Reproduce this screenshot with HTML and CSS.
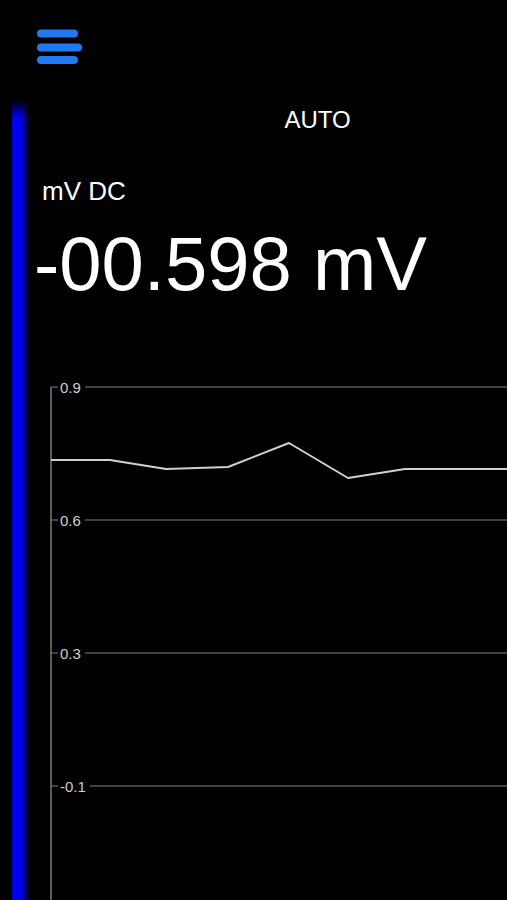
FILE: index.html
```html
<!DOCTYPE html>
<html lang="en">
<head>
  <meta charset="UTF-8" />
  <meta name="viewport" content="width=device-width, initial-scale=1.0" />
  <title>Multimeter</title>
  <link rel="stylesheet" href="styles.css">
</head>
<body>
  <div class="app">
    <div class="menu">
      <svg class="menu-icon" width="46" height="38" viewBox="0 0 46 38">
        <line x1="4" y1="5.5" x2="37" y2="5.5" />
        <line x1="4" y1="19.5" x2="41" y2="19.5" />
        <line x1="4" y1="32" x2="37" y2="32" />
      </svg>
    </div>
    <div class="level"></div>
    <div class="content">
      <div class="mode">AUTO</div>
      <div class="function">mV DC</div>
      <div class="reading">-00.598 mV</div>
      <svg class="chart" width="457" height="523" viewBox="0 0 457 523">
        <line class="axis" x1="1" y1="10" x2="1" y2="523" />
        <line class="grid" x1="1" y1="10" x2="457" y2="10" />
        <line class="grid" x1="1" y1="143" x2="457" y2="143" />
        <line class="grid" x1="1" y1="276" x2="457" y2="276" />
        <line class="grid" x1="1" y1="409" x2="457" y2="409" />
        <rect class="label-bg" x="8" y="2" width="27" height="16" />
        <text class="label" x="10" y="15.5">0.9</text>
        <rect class="label-bg" x="8" y="135" width="27" height="16" />
        <text class="label" x="10" y="148.5">0.6</text>
        <rect class="label-bg" x="8" y="268" width="27" height="16" />
        <text class="label" x="10" y="281.5">0.3</text>
        <rect class="label-bg" x="8" y="401" width="32" height="16" />
        <text class="label" x="10" y="414.5">-0.1</text>
        <polyline class="trace" points="1,83 60,83 116,92 178,90 239,66 298,101 355,92 457,92" />
      </svg>
    </div>
  </div>
</body>
</html>
```

FILE: styles.css
```css
body {
  margin: 0;
  background: #000;
  color: #fff;
  font-family: "Liberation Sans", Arial, sans-serif;
  overflow: hidden;
}
.app {
  display: grid;
  grid-template-columns: 30px 1fr;
  grid-template-rows: 100px 1fr;
  height: 900px;
}
.menu {
  grid-column: 1 / -1;
  padding: 28px 0 0 37px;
}
.menu-icon {
  display: block;
}
.menu-icon line {
  stroke: #1f7af2;
  stroke-width: 8;
  stroke-linecap: round;
}
.level {
  margin-left: 12px;
  background: linear-gradient(to right, #0000c8 0%, #0000ff 12%, #0000ee 50%, #000 100%);
  -webkit-mask-image: linear-gradient(to bottom, transparent 0, #000 18px);
  mask-image: linear-gradient(to bottom, transparent 0, #000 18px);
}
.content {
  min-width: 0;
}
.mode {
  margin-top: 6px;
  padding-left: 98px;
  font-size: 24px;
  line-height: 27px;
  text-align: center;
}
.function {
  margin-top: 44px;
  padding-left: 12px;
  font-size: 26px;
  line-height: 29px;
}
.reading {
  margin-top: 20px;
  padding-left: 4px;
  font-size: 76px;
  line-height: 76px;
  white-space: nowrap;
}
.chart {
  display: block;
  margin: 75px 0 0 20px;
}
.chart .axis {
  stroke: #7a7a7a;
  stroke-width: 1.5;
}
.chart .grid {
  stroke: #808080;
  stroke-width: 1;
}
.chart .label-bg {
  fill: #000;
}
.chart .label {
  fill: #cfcfcf;
  font-size: 15px;
  font-family: "Liberation Sans", Arial, sans-serif;
}
.chart .trace {
  fill: none;
  stroke: #d0d0d0;
  stroke-width: 2;
  stroke-linejoin: round;
}
```
